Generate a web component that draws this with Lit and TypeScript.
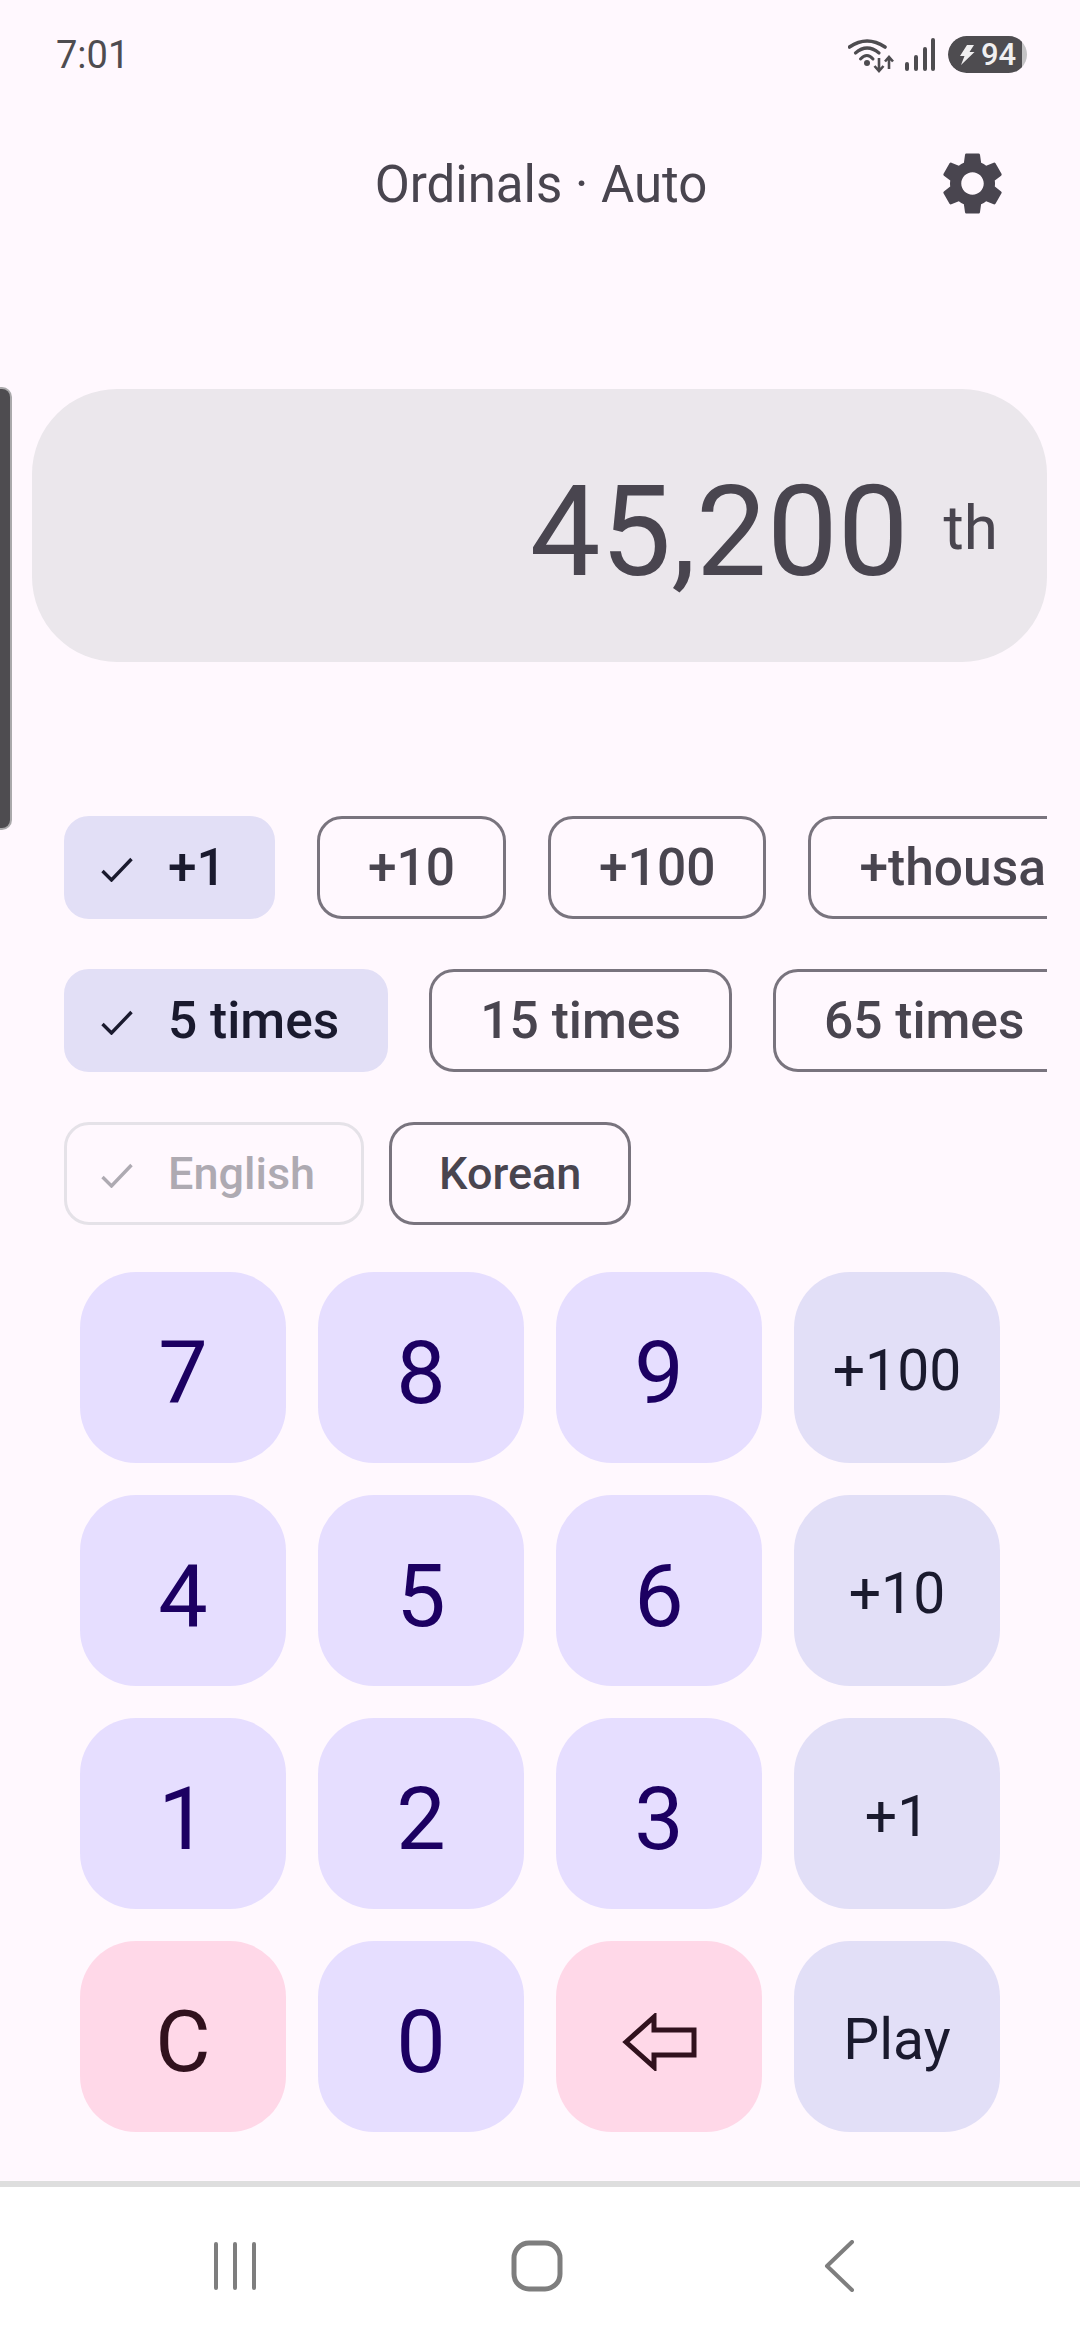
import { LitElement, html, css, svg } from "lit";
import { customElement } from "lit/decorators.js";

const check = html`<svg class="check" viewBox="0 0 32 25" width="32" height="25"><path d="M1.5 14 L10.5 23 L30.5 2" fill="none" stroke="currentColor" stroke-width="3.4"/></svg>`;

const gear = svg`<path d="M19.14 12.94c.04-.3.06-.61.06-.94 0-.32-.02-.64-.07-.94l2.03-1.58a.49.49 0 0 0 .12-.61l-1.92-3.32a.488.488 0 0 0-.59-.22l-2.39.96c-.5-.38-1.03-.7-1.62-.94l-.36-2.54a.484.484 0 0 0-.48-.41h-3.84c-.24 0-.43.17-.47.41l-.36 2.54c-.59.24-1.13.57-1.62.94l-2.39-.96c-.22-.08-.47 0-.59.22L2.74 8.87c-.12.21-.08.47.12.61l2.03 1.58c-.05.3-.09.63-.09.94s.02.64.07.94l-2.03 1.58a.49.49 0 0 0-.12.61l1.92 3.32c.12.22.37.29.59.22l2.39-.96c.5.38 1.03.7 1.62.94l.36 2.54c.05.24.24.41.48.41h3.84c.24 0 .44-.17.47-.41l.36-2.54c.59-.24 1.13-.56 1.62-.94l2.39.96c.22.08.47 0 .59-.22l1.92-3.32c.12-.22.07-.47-.12-.61l-2.01-1.58zM12 15.6c-1.98 0-3.6-1.62-3.6-3.6s1.62-3.6 3.6-3.6 3.6 1.62 3.6 3.6-1.62 3.6-3.6 3.6z"/>`;

type Chip = { t: string; sel?: boolean; dis?: boolean };
const rows: Chip[][] = [
  [{ t: "+1", sel: true }, { t: "+10" }, { t: "+100" }, { t: "+thousand" }],
  [{ t: "5 times", sel: true }, { t: "15 times" }, { t: "65 times" }],
  [{ t: "English", dis: true }, { t: "Korean" }],
];
const keys: { t: string; k: string }[] = [
  { t: "7", k: "d" }, { t: "8", k: "d" }, { t: "9", k: "d" }, { t: "+100", k: "t" },
  { t: "4", k: "d" }, { t: "5", k: "d" }, { t: "6", k: "d" }, { t: "+10", k: "t" },
  { t: "1", k: "d" }, { t: "2", k: "d" }, { t: "3", k: "d" }, { t: "+1", k: "t" },
  { t: "C", k: "p" }, { t: "0", k: "d" }, { t: "back", k: "p" }, { t: "Play", k: "t" },
];

@customElement("app-root")
export class AppRoot extends LitElement {
  static styles = css`
    :host { display: block; width: 1080px; height: 2340px; background: #fff8fe; font-family: Roboto, sans-serif; color: #49454f; position: relative; overflow: hidden; }
    .page { display: flex; flex-direction: column; height: 2340px; }
    .status { height: 108px; display: flex; align-items: flex-start; padding: 0 53px 0 56px; box-sizing: border-box; color: #4e4c50; }
    .time { font-size: 38px; line-height: 40px; margin-top: 35px; }
    .status-icons { margin-left: auto; display: flex; align-items: flex-start; margin-top: 36px; }
    .wifi { margin-top: 2px; }
    .signal { margin-left: 9px; margin-top: 2px; }
    .battery { margin-left: 13px; width: 79px; height: 37px; border-radius: 19px; background: #c4c3c5; overflow: hidden; }
    .battery-fill { width: 74px; height: 37px; background: #4e4c50; border-radius: 19px 0 0 19px; display: flex; align-items: center; color: #f0eff0; font-size: 31px; font-weight: 500; line-height: 37px; padding-left: 11px; box-sizing: border-box; gap: 6px; }
    .appbar { height: 150px; display: grid; grid-template-columns: 1fr auto 1fr; align-items: center; padding: 0 70px 0 72px; box-sizing: border-box; }
    .title { font-size: 51px; color: #49454f; padding-top: 3px; }
    .gear { justify-self: end; fill: #49454f; display: block; }
    .display { margin: 131px 33px 0 32px; height: 273px; border-radius: 85px; background: #ebe7ec; display: flex; justify-content: flex-end; align-items: center; padding-right: 49px; gap: 35px; box-sizing: border-box; }
    .num { font-size: 126px; line-height: 130px; color: #49454f; padding-top: 12px; }
    .ord { font-size: 62px; line-height: 70px; color: #49454f; padding-top: 4px; }
    .chips { margin: 154px 33px 0 64px; display: flex; flex-direction: column; gap: 50px; }
    .row { display: flex; height: 103px; gap: 42px; overflow: hidden; }
    .row.mid { gap: 41px; }
    .row.tight { gap: 25px; }
    .chip { flex: none; height: 103px; box-sizing: border-box; border-radius: 25px; border: 3px solid #79747e; padding: 0 48px; display: flex; align-items: center; font-size: 51.5px; font-weight: 500; color: #49454f; white-space: nowrap; }
    .tight .chip { font-size: 45px; padding: 0 47px; }
    .chip.sel { background: #e2dff6; border-color: #e2dff6; color: #1a1a2e; padding: 0 46px 0 34px; }
    .tight .chip.dis { border-color: #e5e2e8; color: #aeaab2; padding: 0 46px 0 34px; }
    .check { margin-right: 35px; display: block; margin-top: 4px; }
    .keys { margin: 47px 0 0 80px; display: grid; grid-template-columns: repeat(4, 206px); grid-auto-rows: 191px; gap: 32px; }
    .key { border-radius: 56px; display: flex; align-items: center; justify-content: center; box-sizing: border-box; }
    .key.d { background: #e6deff; color: #1c0062; font-size: 88px; padding-top: 10px; }
    .key.t { background: #e2dff7; color: #1a1a2e; font-size: 57px; padding-top: 6px; }
    .key.p { background: #ffd8e8; color: #31111d; font-size: 85px; padding-top: 10px; }
    .key.p.icon { padding: 10px 0 0 2px; }
    .nav { margin-top: auto; height: 159px; box-sizing: border-box; border-top: 6px solid #dedede; background: #fff; display: flex; align-items: center; padding: 5px 0 0 213px; }
    .nav svg { display: block; fill: none; stroke: #7e7e7e; }
    .nav .home { margin-left: 254px; }
    .nav .back { margin-left: 260px; }
    .handle { position: absolute; left: 0; top: 387px; width: 12px; height: 443px; box-sizing: border-box; background: #4e4c50; border: 2px solid #aaa9ab; border-left: none; border-radius: 0 10px 10px 0; }
  `;

  private renderKey(k: { t: string; k: string }) {
    if (k.t === "back") {
      return html`<div class="key p icon"><svg width="76" height="58" viewBox="0 0 76 58"><path d="M4 29 L32 4 V17 H72 V42 H32 V54 Z" fill="none" stroke="#31111d" stroke-width="5"/></svg></div>`;
    }
    return html`<div class="key ${k.k}">${k.t}</div>`;
  }

  render() {
    const rowClass = ["", "mid", "tight"];
    return html`
      <div class="page">
        <div class="status">
          <div class="time">7:01</div>
          <div class="status-icons">
            <svg class="wifi" width="48" height="36" viewBox="0 0 48 36" fill="none" stroke="currentColor" stroke-linecap="round">
              <path d="M1.5 9 Q19 -3 37 9" stroke-width="3.6"/>
              <path d="M7.5 15 Q19 5 31 15" stroke-width="3.2"/>
              <path d="M12.5 21 Q19 14 25 21" stroke-width="3"/>
              <circle cx="19" cy="25" r="3" fill="currentColor" stroke="none"/>
              <path d="M31 20 V32 M26.5 28 L31 33 L35.5 28 M41 31 V20 M37 23.5 L41 19 L45 23.5" stroke-width="2.6" stroke-linecap="butt"/>
            </svg>
            <svg class="signal" width="30" height="34" viewBox="0 0 30 34" stroke="currentColor" stroke-width="4" stroke-linecap="round">
              <path d="M2 26 V31 M11 19 V31 M20 11 V31 M28 2 V31"/>
            </svg>
            <div class="battery"><div class="battery-fill">
              <svg width="16" height="20" viewBox="0 0 16 20"><path d="M8 0 H15 L10.5 7 H15.5 L2 20 L5.5 11 H1 Z" fill="currentColor"/></svg>
              <span>94</span>
            </div></div>
          </div>
        </div>
        <div class="appbar">
          <span></span>
          <div class="title">Ordinals · Auto</div>
          <svg class="gear" width="75" height="75" viewBox="0 0 24 24">${gear}</svg>
        </div>
        <div class="display"><div class="num">45,200</div><div class="ord">th</div></div>
        <div class="chips">
          ${rows.map((r, i) => html`<div class="row ${rowClass[i]}">
            ${r.map((c) => html`<div class="chip ${c.sel ? "sel" : ""} ${c.dis ? "dis" : ""}">${c.sel || c.dis ? check : ""}${c.t}</div>`)}
          </div>`)}
        </div>
        <div class="keys">${keys.map((k) => this.renderKey(k))}</div>
        <div class="nav">
          <svg width="44" height="48" viewBox="0 0 44 48" stroke-width="4" stroke-linecap="round"><path d="M3 2 V46 M22 2 V46 M41 2 V46"/></svg>
          <svg class="home" width="52" height="52" viewBox="0 0 52 52" stroke-width="5"><rect x="3" y="3" width="46" height="46" rx="15"/></svg>
          <svg class="back" width="33" height="52" viewBox="0 0 33 52" stroke-width="4" stroke-linecap="round" stroke-linejoin="round"><path d="M29 2 L4 26 L29 50"/></svg>
        </div>
        <div class="handle"></div>
      </div>
    `;
  }
}
